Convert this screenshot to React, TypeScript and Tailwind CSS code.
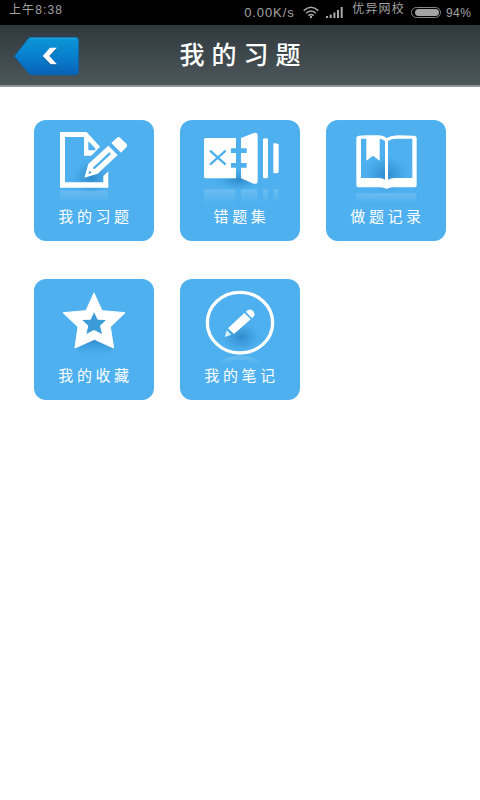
import type { ReactNode } from "react";

const TILE_BLUE = "#4eb0ef";

function Icon({ viewBox, children }: { viewBox: string; children: ReactNode }) {
  return (
    <svg viewBox={viewBox} className="block h-[85px] w-[120px] shrink-0" aria-hidden="true">
      <defs>
        <radialGradient id="shade">
          <stop offset="0" stopColor="#1f78b8" stopOpacity="0.65" />
          <stop offset="0.5" stopColor="#2c87c8" stopOpacity="0.35" />
          <stop offset="1" stopColor={TILE_BLUE} stopOpacity="0" />
        </radialGradient>
        <linearGradient id="reflect" x1="0" y1="0" x2="0" y2="1">
          <stop offset="0" stopColor="#fff" stopOpacity="0.16" />
          <stop offset="1" stopColor="#fff" stopOpacity="0" />
        </linearGradient>
        <linearGradient id="starShade" x1="0" y1="0" x2="0" y2="1">
          <stop offset="0" stopColor="#2079bb" stopOpacity="0.75" />
          <stop offset="1" stopColor={TILE_BLUE} stopOpacity="0" />
        </linearGradient>
      </defs>
      {children}
    </svg>
  );
}

function ExerciseIcon() {
  return (
    <Icon viewBox="24 24 360 255">
      <ellipse cx="195" cy="198" rx="66" ry="62" fill="url(#shade)" />
      <rect x="102" y="236" width="144" height="34" fill="url(#reflect)" />
      <path
        fillRule="evenodd"
        d="M182 60H102V227H247V178L232 192V211H117V75H174V131H196L222 104ZM187 88V115H206L209 110Z"
        fill="#fff"
      />
      <path
        fillRule="evenodd"
        d="M175 197L187 156L247 101L275 129L215 185ZM200 168L206 171L255 126L250 121ZM191 176L187 186L197 182Z"
        fill="#fff"
      />
      <path d="M256 93L273 77Q278 73 283 78L302 96Q306 101 301 106L285 122Z" fill="#fff" />
    </Icon>
  );
}

function MistakesIcon() {
  return (
    <Icon viewBox="24 24 360 255">
      <ellipse cx="200" cy="204" rx="75" ry="34" fill="url(#shade)" />
      <path d="M96 232H190V278H96ZM207 232H257V278H207ZM273 232H288V270H273ZM305 232H320V265H305Z" fill="url(#reflect)" />
      <path d="M101 78H192V199H101Q96 199 96 194V83Q96 78 101 78Z" fill="#fff" />
      <path d="M207 78L245 63Q257 60 257 72V206Q257 218 245 215L207 199Z" fill="#fff" />
      <path d="M273 80Q287 76 288 83V195Q287 201 273 197ZM304 94Q319 92 320 98V179Q319 185 304 183Z" fill="#fff" />
      <path d="M114 116L161 158M161 116L114 158" stroke={TILE_BLUE} strokeWidth="7" />
      <path d="M177 109H224V123H177ZM177 153H224V167H177Z" fill={TILE_BLUE} />
    </Icon>
  );
}

function RecordIcon() {
  return (
    <Icon viewBox="24 24 360 255">
      <ellipse cx="205" cy="188" rx="75" ry="65" fill="url(#shade)" />
      <rect x="115" y="244" width="180" height="30" fill="url(#reflect)" />
      <path
        fillRule="evenodd"
        d="M124 71L143 70H183Q197 70 206 78Q220 70 240 70L287 71Q296 71 296 79V218Q296 226 287 226H223Q215 226 206 231Q197 226 187 226H123Q115 226 115 218V79Q115 71 124 71ZM129 80V198H183Q194 198 201 203V87Q193 80 180 80ZM210 87V203Q219 198 229 198H283V80H235Q220 80 210 87Z"
        fill="#fff"
      />
      <path d="M145 76H185V146L165 131L145 146Z" fill="#fff" />
    </Icon>
  );
}

function StarIcon() {
  return (
    <Icon viewBox="24 21 360 255">
      <path d="M150 227L205 200L260 227L245 262H162Z" fill="url(#starShade)" />
      <path
        d="M204 63L228 116L297 122L253 165L263 228L205 202L147 228L156 165L111 122L180 116Z"
        fill="#fff"
        stroke="#fff"
        strokeWidth="3"
        strokeLinejoin="round"
      />
      <path d="M204 121L215 143L240 144L222 161L228 186L204 174L181 186L187 161L169 144L194 143Z" fill="#3c9cda" />
    </Icon>
  );
}

function NotesIcon() {
  return (
    <Icon viewBox="24 21 360 255">
      <ellipse cx="207" cy="195" rx="66" ry="50" fill="url(#shade)" />
      <path d="M137 270Q204 232 270 270L260 280Q204 248 148 280Z" fill="url(#reflect)" />
      <ellipse cx="204" cy="152" rx="98" ry="91" fill="none" stroke="#fff" strokeWidth="10" />
      <path d="M168 169L217 123L236 142L186 186Z" fill="#fff" />
      <path d="M223 119Q235 109 244 119Q251 129 240 137Z" fill="#fff" stroke="#fff" strokeWidth="3" strokeLinejoin="round" />
      <path d="M158 195L164 175L178 188Z" fill="#d9f3ff" />
    </Icon>
  );
}

const TILES = [
  { label: "我的习题", icon: <ExerciseIcon /> },
  { label: "错题集", icon: <MistakesIcon /> },
  { label: "做题记录", icon: <RecordIcon /> },
  { label: "我的收藏", icon: <StarIcon /> },
  { label: "我的笔记", icon: <NotesIcon /> },
];

function StatusBar() {
  return (
    <div className="flex h-[25px] items-start bg-black text-[#a3a3a3]">
      <span className="ml-[9px] mt-[3px] text-[12px] leading-[14px] tracking-[1.1px]">上午8:38</span>
      <div className="ml-auto flex items-start pr-[8px]">
        <span className="mt-[5px] w-[53px] whitespace-nowrap text-[13px] leading-4 tracking-[0.9px]">0.00K/s</span>
        <svg viewBox="0 0 16 13" className="ml-[6px] mt-[6px] h-[13px] w-4" fill="none" stroke="#a8a8a8" strokeWidth="1.5">
          <path d="M0.7 4.6Q8 -2 15.3 4.6M3 7.3Q8 2.7 13 7.3M5.3 9.8Q8 7.3 10.7 9.8" />
          <circle cx="8" cy="11" r="1.2" fill="#a8a8a8" stroke="none" />
        </svg>
        <svg viewBox="0 0 17 12" className="ml-[7px] mt-[7px] h-3 w-[17px]" fill="#a8a8a8">
          <path d="M0 9h2v2H0zM3.7 7.5h2V11h-2zM7.4 5.5h2V11h-2zM11 3h2v8h-2zM14.7 0h2v11h-2z" />
        </svg>
        <span className="ml-[9px] mt-[2px] whitespace-nowrap text-[12px] leading-[15px] tracking-[1.2px]">优异网校</span>
        <div className="ml-[6px] mt-[7px] h-[11px] w-[30px] rounded-full border border-[#858585] p-px">
          <div className="ml-[2px] h-full rounded-full bg-[#a3a3a3]" />
        </div>
        <span className="ml-[5px] mt-[5px] w-[26px] whitespace-nowrap text-[12px] leading-4 tracking-[0.4px]">94%</span>
      </div>
    </div>
  );
}

function Header() {
  return (
    <header className="grid h-[62px] grid-cols-[96px_1fr_96px] items-center border-b-2 border-[#8f9699] bg-[repeating-linear-gradient(45deg,rgba(0,0,0,0.07)_0px,rgba(0,0,0,0.07)_1px,transparent_1px,transparent_2.83px),repeating-linear-gradient(-45deg,rgba(0,0,0,0.07)_0px,rgba(0,0,0,0.07)_1px,transparent_1px,transparent_2.83px),linear-gradient(#303a40,#505b5e)]">
      <button aria-label="返回" className="ml-[13px] mt-px h-[40px] w-[67px]">
        <svg viewBox="39 108 201 120" className="block h-[40px] w-[67px]">
          <defs>
            <linearGradient id="back" x1="0" y1="0" x2="0" y2="1">
              <stop offset="0" stopColor="#0c96d6" />
              <stop offset="0.5" stopColor="#087fcd" />
              <stop offset="1" stopColor="#0862b6" />
            </linearGradient>
          </defs>
          <path d="M92 112H227Q236 112 236 121V216Q236 225 227 225H98Q90 225 85 219L43 169L82 119Q86 112 92 112Z" fill="url(#back)" stroke="#0a5fa5" strokeWidth="2" />
          <path d="M92 115H229" stroke="#36afe5" strokeWidth="2" />
          <path d="M150 146H171L148 171L171 196H152L128 171Z" fill="#075493" />
          <path d="M150 143H171L148 168L171 193H152L128 168Z" fill="#fff" />
        </svg>
      </button>
      <h1 className="whitespace-nowrap pl-[7px] text-center text-[25px] font-medium leading-8 tracking-[7px] text-white">我的习题</h1>
    </header>
  );
}

export default function App() {
  return (
    <div className="h-[800px] w-[480px] overflow-hidden bg-white font-['Liberation_Sans','Noto_Sans_CJK_SC',sans-serif]">
      <StatusBar />
      <Header />
      <main className="grid grid-cols-[repeat(3,120px)] gap-x-[26px] gap-y-[38px] pl-[34px] pt-[33px]">
        {TILES.map((tile) => (
          <div key={tile.label} className="flex h-[121px] flex-col items-center rounded-[12px] bg-[#4eb0ef]">
            {tile.icon}
            <span className="whitespace-nowrap pl-[3px] text-[15px] leading-6 tracking-[3.6px] text-white">{tile.label}</span>
          </div>
        ))}
      </main>
    </div>
  );
}
